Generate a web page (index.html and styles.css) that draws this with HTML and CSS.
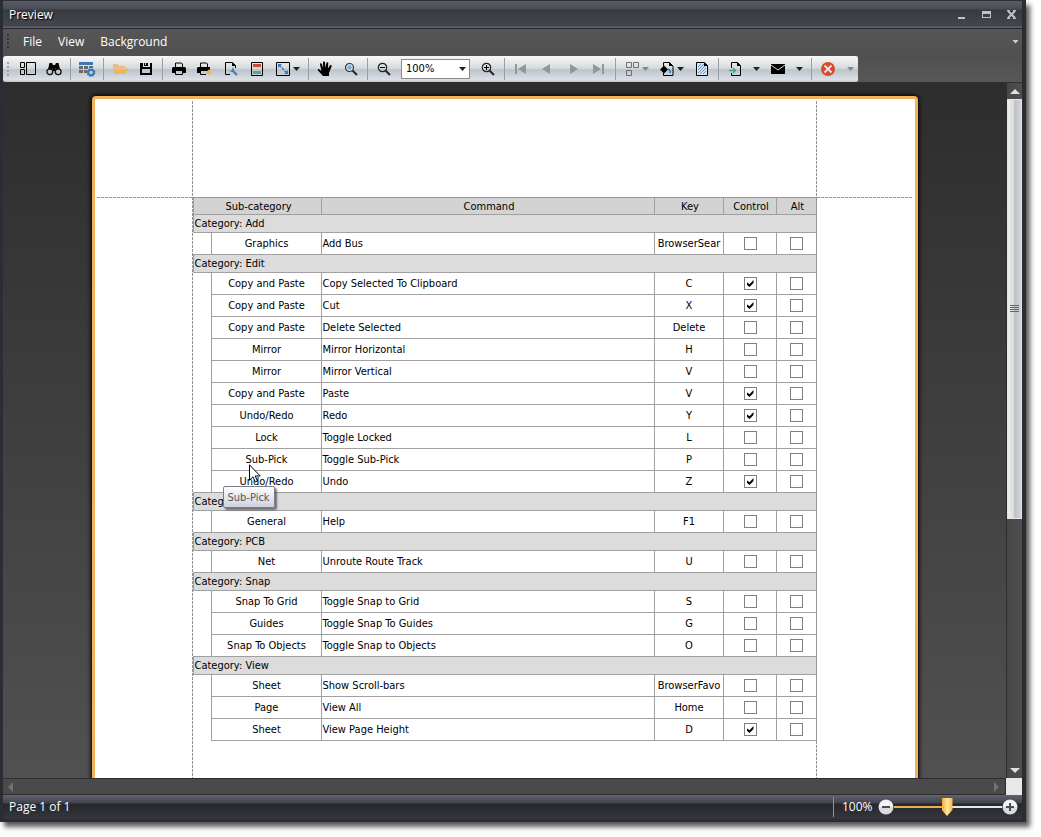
FILE: index.html
```html
<!DOCTYPE html>
<html lang="en">
<head>
<meta charset="utf-8">
<title>Preview</title>
<link rel="stylesheet" href="styles.css">
</head>
<body>
<div class="window">
  <header class="titlebar">
    <h1 class="title">Preview</h1>
    <div class="window-buttons">
      <button aria-label="Minimize"><svg width="11" height="11" viewBox="0 0 11 11"><path d="M2 8h7v2H2z" fill="#b9c3ce"/></svg></button>
      <button aria-label="Maximize"><svg width="11" height="11" viewBox="0 0 11 11"><path d="M1 2h9v7H1zM2 5v3h7V5z" fill="#b9c3ce" fill-rule="evenodd"/></svg></button>
      <button aria-label="Close"><svg width="11" height="11" viewBox="0 0 11 11"><path d="M2 2L9 9M9 2L2 9" stroke="#b9c3ce" stroke-width="2"/><path d="M1 1.500h3M7 1.500h3M1 9.500h3M7 9.500h3" stroke="#b9c3ce"/></svg></button>
    </div>
  </header>

  <div class="bars">
    <nav class="menubar">
      <span class="grip grip-dark"></span>
      <button class="menu">File</button>
      <button class="menu">View</button>
      <button class="menu">Background</button>
      <button class="menu-more" aria-label="Menu options"><i class="arrow"></i></button>
    </nav>
    <div class="toolbar">
      <span class="grip"></span>
      <button class="tool" aria-label="Document map"><svg width="16" height="14" viewBox="0 0 16 14"><path d="M.5.5h4v5h-4zM.5 7.500h4v5h-4zM6.500.5h9v12h-9z" fill="none" stroke="#000"/></svg></button>
      <button class="tool" aria-label="Search"><svg width="16" height="14" viewBox="0 0 16 14"><path d="M3.500 1H6l1 2h2l1-2h2.500L14 7.500H9.500V6h-3v1.500H2z"/><circle cx="3.800" cy="9.700" r="2.900" fill="none" stroke="#111" stroke-width="1.300"/><circle cx="12.200" cy="9.700" r="2.900" fill="none" stroke="#111" stroke-width="1.300"/><path d="M6.500 4h3v5h-3z"/></svg></button>
      <i class="sep"></i>
      <button class="tool" aria-label="Customize"><svg width="18" height="16" viewBox="0 0 18 16"><path d="M1 1h14v3H1z" fill="#3979b9"/><path d="M1 5h4v3H1zM6 5h4v3H6zM11 5h4v2h-4zM1 9h4v3H1zM6 9h3v3H6z" fill="#6a6a6a"/><circle cx="13" cy="11.500" r="2.800" fill="none" stroke="#3979b9" stroke-width="2"/><circle cx="13" cy="11.500" r="3.800" fill="none" stroke="#3979b9" stroke-width="1.200" stroke-dasharray="1.500"/></svg></button>
      <i class="sep"></i>
      <button class="tool" aria-label="Open"><svg width="16" height="14" viewBox="0 0 16 14"><path d="M1 2h5l1 2h6v2H4L1 11z" fill="#e3bd82"/><path d="M4 6.500h12L13 12H1z" fill="#f3b55b"/></svg></button>
      <button class="tool" aria-label="Save"><svg width="14" height="14" viewBox="0 0 14 14"><path d="M1 1h12v12H1zM4 1v4h7V1zM3 7v4h8V7z" fill-rule="evenodd"/><path d="M5 1h4v3H5z"/><path d="M6.500 1v2" stroke="#ddd"/></svg></button>
      <i class="sep"></i>
      <button class="tool" aria-label="Print"><svg width="16" height="14" viewBox="0 0 16 14"><path d="M1 6l1-1h12l1 1v5h-3V9H4v2H1z"/><path d="M4.500 6V1h6l1 1v4M4.500 9v3.500h7V9" fill="none" stroke="#000"/></svg></button>
      <button class="tool" aria-label="Quick print"><svg width="16" height="14" viewBox="0 0 16 14"><path d="M0 6l1-1h12v3l-3 1H4v2H0z"/><path d="M3.500 6V1h6l1 1v4M3.500 9v3.500H9" fill="none" stroke="#000"/><path d="M12 6.500l1 3 3 1.500-3 1-2 2v-2l-2.500-1 2.500-1.500z" fill="#f3b55b"/></svg></button>
      <button class="tool" aria-label="Page setup"><svg width="14" height="14" viewBox="0 0 14 14"><path d="M6 12.500H1.500V.5h7l3 3V6" fill="none" stroke="#000"/><path d="M8 0v4h4z"/><path d="M8.500 8.500L13 13" stroke="#3979b9" stroke-width="2"/><path d="M8 5.500c2 .5 2.500 2 1.500 3.500S6 10 5.500 8l1.700.8 1.300-1.300z" fill="#3979b9"/></svg></button>
      <button class="tool" aria-label="Header and footer"><svg width="14" height="14" viewBox="0 0 14 14"><path d="M1.500.5h11v13h-11z" fill="none" stroke="#000"/><path d="M3 2h8v3H3z" fill="#d14b2f"/><path d="M3 9h8v3H3z" fill="#4dae89"/></svg></button>
      <button class="tool drop" aria-label="Scale"><svg width="14" height="14" viewBox="0 0 14 14"><path d="M.5.5h13v13H.5z" fill="none" stroke="#000"/><path d="M3 3l8 8" stroke="#3979b9" stroke-width="1.500" stroke-dasharray="3 1"/><path d="M2 2h4L2 6zM12 12V8l-4 4z" fill="#3979b9"/></svg><i class="arrow"></i></button>
      <i class="sep"></i>
      <button class="tool" aria-label="Hand tool"><svg width="16" height="16" viewBox="0 0 16 16"><path d="M6 15L1 9.500C.2 8.400 1.500 7.600 2.500 8.400L4.500 10 3 3.500C2.800 2 4.500 2 4.900 3.300L6.200 7 6 1.600C6 .2 8 .2 8 1.600L8.400 7l1-5c.3-1.300 2-1 1.900.3L10.900 7.600l2-3c.7-1 2.300-.4 1.700.9L12 12v3z"/></svg></button>
      <button class="tool" aria-label="Magnifier"><svg width="14" height="14" viewBox="0 0 14 14"><path d="M8.500 8.500L13 13" stroke="#222" stroke-width="1.800"/><circle cx="5.500" cy="5.500" r="4" fill="#d6e0ea" stroke="#333" stroke-width="1.200"/><circle cx="5.500" cy="5.500" r="2.200" fill="#7eaedb"/></svg></button>
      <i class="sep"></i>
      <button class="tool" aria-label="Zoom out"><svg width="14" height="14" viewBox="0 0 14 14"><path d="M8.500 8.500L13 13" stroke="#222" stroke-width="1.800"/><circle cx="5.500" cy="5.500" r="4.200" fill="none" stroke="#222" stroke-width="1.200"/><path d="M3 5.500h5" stroke="#000"/></svg></button>
      <span class="zoom-box"><select aria-label="Zoom"><option>100%</option></select><i class="arrow"></i></span>
      <button class="tool" aria-label="Zoom in"><svg width="14" height="14" viewBox="0 0 14 14"><path d="M8.500 8.500L13 13" stroke="#222" stroke-width="1.800"/><circle cx="5.500" cy="5.500" r="4.200" fill="none" stroke="#222" stroke-width="1.200"/><path d="M3 5.500h5M5.500 3v5" stroke="#000"/></svg></button>
      <i class="sep"></i>
      <button class="tool" aria-label="First page"><svg width="12" height="10" viewBox="0 0 12 10"><path d="M0 0h2v10H0zM11 0v10L3 5z" fill="#939699"/></svg></button>
      <button class="tool" aria-label="Previous page"><svg width="10" height="10" viewBox="0 0 10 10"><path d="M8 0v10L0 5z" fill="#939699"/></svg></button>
      <button class="tool" aria-label="Next page"><svg width="10" height="10" viewBox="0 0 10 10"><path d="M2 0v10l8-5z" fill="#939699"/></svg></button>
      <button class="tool" aria-label="Last page"><svg width="12" height="10" viewBox="0 0 12 10"><path d="M9 0h2v10H9zM0 0v10l8-5z" fill="#939699"/></svg></button>
      <i class="sep"></i>
      <button class="tool drop off" aria-label="Multiple pages"><svg width="14" height="16" viewBox="0 0 14 16"><path d="M1.500 1.500h5v5h-5zM8.500 1.500h5v5h-5zM1.500 9.500h5v5h-5z" fill="none" stroke="#6d6e70"/></svg><i class="arrow"></i></button>
      <button class="tool drop" aria-label="Page color"><svg width="14" height="14" viewBox="0 0 14 14"><path d="M3.500 4V.5h6l3.500 3.500v9.500H3.500V11" fill="none" stroke="#000"/><path d="M9 0v4h4zM0 7.500L4 3.500l4 4-4 4z"/><path d="M8 7q3 1 2 4" fill="none" stroke="#3979b9" stroke-width="1.600"/></svg><i class="arrow"></i></button>
      <button class="tool" aria-label="Watermark"><svg width="14" height="14" viewBox="0 0 14 14"><path d="M1.500.5h8l3 3v10h-11z" fill="#d8e3ee" stroke="#000"/><path d="M9 0v4h4z"/><path d="M3 5l3-3M3 8l6-6M3 11l7-7M5 12l6-6M8 12l3-3" stroke="#5d94cb"/></svg></button>
      <i class="sep"></i>
      <button class="tool split" aria-label="Export"><svg width="14" height="14" viewBox="0 0 14 14"><path d="M3.500 6V.5h6l3 3v10h-9V11" fill="none" stroke="#000"/><path d="M9 0v4h4z"/><path d="M1 8.500h6M5 6l2.500 2.500L5 11" fill="none" stroke="#3aa77c" stroke-width="1.300"/></svg><i class="arrow"></i></button>
      <button class="tool split" aria-label="Send by e-mail"><svg width="14" height="12" viewBox="0 0 14 12"><path d="M0 1h14v10H0z"/><path d="M0 2l7 5 7-5" fill="none" stroke="#d5d9dd"/></svg><i class="arrow"></i></button>
      <i class="sep"></i>
      <button class="tool" aria-label="Close preview"><svg width="14" height="14" viewBox="0 0 14 14"><circle cx="7" cy="7" r="7" fill="#d84a2d"/><path d="M3.500 3.500l7 7M10.500 3.500l-7 7" stroke="#e8e8e8" stroke-width="1.800"/></svg></button>
      <button class="tool-more" aria-label="Toolbar options"><i class="arrow"></i></button>
    </div>
  </div>

  <main class="viewer">
    <div class="canvas">
      <article class="paper">
        <table class="report">
          <colgroup><col class="c-indent"><col class="c-sub"><col class="c-cmd"><col class="c-key"><col class="c-ctl"><col class="c-alt"></colgroup>
          <thead><tr><th colspan="2">Sub-category</th><th>Command</th><th>Key</th><th>Control</th><th>Alt</th></tr></thead>
          <tbody>
            <tr class="group"><td colspan="6">Category: Add</td></tr>
            <tr><td></td><td>Graphics</td><td>Add Bus</td><td>BrowserSear</td><td><input type="checkbox" aria-label="Control"></td><td><input type="checkbox" aria-label="Alt"></td></tr>
            <tr class="group"><td colspan="6">Category: Edit</td></tr>
            <tr><td></td><td>Copy and Paste</td><td>Copy Selected To Clipboard</td><td>C</td><td><input type="checkbox" aria-label="Control" checked></td><td><input type="checkbox" aria-label="Alt"></td></tr>
            <tr><td></td><td>Copy and Paste</td><td>Cut</td><td>X</td><td><input type="checkbox" aria-label="Control" checked></td><td><input type="checkbox" aria-label="Alt"></td></tr>
            <tr><td></td><td>Copy and Paste</td><td>Delete Selected</td><td>Delete</td><td><input type="checkbox" aria-label="Control"></td><td><input type="checkbox" aria-label="Alt"></td></tr>
            <tr><td></td><td>Mirror</td><td>Mirror Horizontal</td><td>H</td><td><input type="checkbox" aria-label="Control"></td><td><input type="checkbox" aria-label="Alt"></td></tr>
            <tr><td></td><td>Mirror</td><td>Mirror Vertical</td><td>V</td><td><input type="checkbox" aria-label="Control"></td><td><input type="checkbox" aria-label="Alt"></td></tr>
            <tr><td></td><td>Copy and Paste</td><td>Paste</td><td>V</td><td><input type="checkbox" aria-label="Control" checked></td><td><input type="checkbox" aria-label="Alt"></td></tr>
            <tr><td></td><td>Undo/Redo</td><td>Redo</td><td>Y</td><td><input type="checkbox" aria-label="Control" checked></td><td><input type="checkbox" aria-label="Alt"></td></tr>
            <tr><td></td><td>Lock</td><td>Toggle Locked</td><td>L</td><td><input type="checkbox" aria-label="Control"></td><td><input type="checkbox" aria-label="Alt"></td></tr>
            <tr><td></td><td>Sub-Pick</td><td>Toggle Sub-Pick</td><td>P</td><td><input type="checkbox" aria-label="Control"></td><td><input type="checkbox" aria-label="Alt"></td></tr>
            <tr><td></td><td>Undo/Redo</td><td>Undo</td><td>Z</td><td><input type="checkbox" aria-label="Control" checked></td><td><input type="checkbox" aria-label="Alt"></td></tr>
            <tr class="group"><td colspan="6">Category: Help</td></tr>
            <tr><td></td><td>General</td><td>Help</td><td>F1</td><td><input type="checkbox" aria-label="Control"></td><td><input type="checkbox" aria-label="Alt"></td></tr>
            <tr class="group"><td colspan="6">Category: PCB</td></tr>
            <tr><td></td><td>Net</td><td>Unroute Route Track</td><td>U</td><td><input type="checkbox" aria-label="Control"></td><td><input type="checkbox" aria-label="Alt"></td></tr>
            <tr class="group"><td colspan="6">Category: Snap</td></tr>
            <tr><td></td><td>Snap To Grid</td><td>Toggle Snap to Grid</td><td>S</td><td><input type="checkbox" aria-label="Control"></td><td><input type="checkbox" aria-label="Alt"></td></tr>
            <tr><td></td><td>Guides</td><td>Toggle Snap To Guides</td><td>G</td><td><input type="checkbox" aria-label="Control"></td><td><input type="checkbox" aria-label="Alt"></td></tr>
            <tr><td></td><td>Snap To Objects</td><td>Toggle Snap to Objects</td><td>O</td><td><input type="checkbox" aria-label="Control"></td><td><input type="checkbox" aria-label="Alt"></td></tr>
            <tr class="group"><td colspan="6">Category: View</td></tr>
            <tr><td></td><td>Sheet</td><td>Show Scroll-bars</td><td>BrowserFavo</td><td><input type="checkbox" aria-label="Control"></td><td><input type="checkbox" aria-label="Alt"></td></tr>
            <tr><td></td><td>Page</td><td>View All</td><td>Home</td><td><input type="checkbox" aria-label="Control"></td><td><input type="checkbox" aria-label="Alt"></td></tr>
            <tr><td></td><td>Sheet</td><td>View Page Height</td><td>D</td><td><input type="checkbox" aria-label="Control" checked></td><td><input type="checkbox" aria-label="Alt"></td></tr>
          </tbody>
        </table>
        <i class="guide guide-top"></i>
        <i class="guide guide-left"></i>
        <i class="guide guide-right"></i>
        <svg class="cursor" width="12" height="19" viewBox="0 0 12 19"><path d="M.5.800v15.400l3.500-3.400 2.300 5.200 2.200-1-2.300-5h5z" fill="#fff" stroke="#000"/></svg>
        <div class="tooltip" role="tooltip">Sub-Pick</div>
      </article>
    </div>
    <div class="vscroll">
      <button class="scroll-end" aria-label="Scroll up"><svg width="10" height="5" viewBox="0 0 10 5"><path d="M5 0l5 5H0z" fill="#e0e0e0"/></svg></button>
      <div class="thumb"><i></i></div>
      <button class="scroll-end scroll-down" aria-label="Scroll down"><svg width="10" height="5" viewBox="0 0 10 5"><path d="M0 0h10L5 5z" fill="#e0e0e0"/></svg></button>
    </div>
    <div class="hscroll">
      <svg width="5" height="10" viewBox="0 0 5 10"><path d="M5 0v10L0 5z" fill="#727272"/></svg>
      <svg width="5" height="10" viewBox="0 0 5 10"><path d="M0 0v10l5-5z" fill="#727272"/></svg>
    </div>
    <div class="corner"></div>
  </main>

  <footer class="statusbar">
    <span class="page-info">Page 1 of 1</span>
    <i class="status-sep"></i>
    <label class="zoom-label" for="zoom">100%</label>
    <button class="round" aria-label="Decrease zoom"><svg width="16" height="16" viewBox="0 0 16 16"><circle cx="8" cy="8" r="7.500" fill="#d9dbde"/><path d="M1 8a7 7 0 0 1 14 0z" fill="#f3f3f3"/><path d="M4 8h8" stroke="#484c54" stroke-width="2"/></svg></button>
    <input class="slider" id="zoom" type="range" min="0" max="100" value="49">
    <button class="round" aria-label="Increase zoom"><svg width="16" height="16" viewBox="0 0 16 16"><circle cx="8" cy="8" r="7.500" fill="#d9dbde"/><path d="M1 8a7 7 0 0 1 14 0z" fill="#f3f3f3"/><path d="M4 8h8M8 4v8" stroke="#484c54" stroke-width="2"/></svg></button>
  </footer>
</div>
</body>
</html>
```

FILE: styles.css
```css
* { box-sizing: border-box; }

body {
  margin: 0;
  background: #fff;
  overflow: hidden;
  font: 12px/16px "Open Sans", "Noto Sans", sans-serif;
}

button {
  margin: 0;
  padding: 0;
  border: 0;
  background: none;
  font: inherit;
  color: inherit;
}

svg { display: block; }

/* Window frame */
.window {
  display: flex;
  flex-direction: column;
  height: calc(100vh - 15px);
  margin: 0 15px 15px 0;
  border: solid #2b2d34;
  border-width: 1px 4px 3px 3px;
  background: #4f4f4f;
  box-shadow: 4px 5px 5px rgba(0, 0, 0, .65);
  color: #fff;
}

.titlebar {
  display: flex;
  flex: none;
  align-items: center;
  justify-content: space-between;
  height: 28px;
  padding: 0 5px 1px 6px;
  background: linear-gradient(#5a5c66 0, #484a55 8px, #393a3e 9px, #44464f 25px, #5f626d 26px, #5f626d 27px, #272830 27px);
}

.title {
  margin: 0;
  font-size: 12px;
  font-weight: 400;
  text-shadow: 1px 1px 1px #000;
}

.window-buttons { display: flex; gap: 14px; }

/* Menu bar and toolbar */
.bars {
  flex: none;
  background: linear-gradient(#565656, #505050 50%, #585858);
  border-bottom: 1px solid #303030;
}

.menubar {
  display: flex;
  align-items: center;
  height: 27px;
  padding-bottom: 2px;
}

.menu { padding: 0 8px; }
.menu-more { margin-left: auto; padding: 6px 3px; color: #ccd; }

.grip {
  width: 12px;
  height: 15px;
  background: radial-gradient(circle at 1px 1px, #9da3a9 1px, transparent 1px) 4px 0 / 8px 4px repeat-y;
}

.grip-dark {
  background-image: radial-gradient(circle at 1px 1px, #333 1px, transparent 1px);
}

.arrow {
  display: block;
  flex: none;
  width: 7px;
  height: 4px;
  background: currentColor;
  clip-path: polygon(0 0, 100% 0, 50% 100%);
}

.toolbar {
  display: flex;
  align-items: center;
  width: max-content;
  height: 26px;
  border-radius: 3px 2px 2px 3px;
  background: linear-gradient(#f7f7f8, #d7dadd 47%, #bcc3ca 53%, #dbe1e7 24px, #b9bec4);
  color: #222;
}

.tool {
  display: flex;
  align-items: center;
  justify-content: center;
  width: 26px;
  height: 26px;
}

.drop { width: 35px; padding-left: 6px; justify-content: flex-start; gap: 3px; }
.split { width: 43px; padding-left: 6px; justify-content: flex-start; gap: 11px; }
.off .arrow { background: #85888b; }
.tool-more { width: 17px; padding-left: 6px; color: #7c8aa0; }

.sep {
  width: 1px;
  height: 22px;
  margin: 0 3px;
  background: #9a9fa5;
}

.zoom-box {
  display: flex;
  align-items: center;
  width: 69px;
  margin: 0 5px 0 4px;
}

.zoom-box select {
  appearance: none;
  width: 69px;
  height: 20px;
  padding: 0 0 0 4px;
  border: 1px solid #8a8a8a;
  border-radius: 0;
  background: #fff;
  color: #000;
  font: 11px/14px "DejaVu Sans Condensed", "DejaVu Sans", sans-serif;
}

.zoom-box .arrow { margin-left: -11px; }

/* Document area */
.viewer {
  display: grid;
  flex: 1;
  grid-template: minmax(0, 1fr) 17px / minmax(0, 1fr) 16px;
  min-height: 0;
}

.canvas {
  overflow: hidden;
  padding-top: 13px;
  background: linear-gradient(#2d2d2d, #515151);
}

.paper {
  position: relative;
  width: 826px;
  min-height: 1100px;
  margin: 0 auto;
  padding: 98px;
  border: 3px solid #f2b25c;
  border-radius: 4px;
  background: #fff;
  box-shadow: 0 0 4px 1px #000;
}

.report {
  width: 100%;
  table-layout: fixed;
  border-collapse: separate;
  border-spacing: 0;
  color: #000;
  font: 11px/14px "DejaVu Sans Condensed", "DejaVu Sans", sans-serif;
}

.c-indent { width: 18px; }
.c-sub { width: 110px; }
.c-key { width: 69px; }
.c-ctl { width: 53px; }
.c-alt { width: 41px; }

.report th,
.report td {
  height: 22px;
  padding: 0 0 0 1px;
  overflow: hidden;
  border: solid #a0a0a0;
  border-width: 1px 0 0 1px;
  text-align: center;
  white-space: nowrap;
}

.report th {
  height: 17px;
  padding: 1px 0 0 3px;
  background: #d3d3d3;
  font-weight: 400;
}

.report .group td {
  height: 18px;
  background: #dcdcdc;
  text-align: left;
}

.report td:nth-child(3) { text-align: left; }
.report tr > :last-child { border-right-width: 1px; }
.report tr:not(.group) td:first-child { border-width: 0; }
.report .group + tr td:first-child { border-top-width: 1px; }
.report tbody tr:last-child td { height: 23px; }
.report tbody tr:last-child td:not(:first-child) { border-bottom-width: 1px; }

.report input {
  display: block;
  appearance: none;
  width: 13px;
  height: 13px;
  margin: 0 auto;
  border: 1px solid #808080;
  background: #fff;
}

.report input:checked::after {
  content: "";
  display: block;
  width: 7px;
  height: 7px;
  margin: 2px;
  background: #000;
  clip-path: polygon(0 28%, 43% 62%, 100% 0, 100% 42%, 43% 100%, 0 66%);
}

.guide { position: absolute; }

.guide-top {
  top: 98px;
  left: 2px;
  right: 2px;
  height: 1px;
  background: repeating-linear-gradient(90deg, #929292 0 3px, transparent 3px 4px);
}

.guide-left,
.guide-right {
  top: 2px;
  bottom: 2px;
  width: 1px;
  background: repeating-linear-gradient(#929292 0 3px, transparent 3px 4px);
}

.guide-left { left: 97px; }
.guide-right { right: 98px; }

.cursor { position: absolute; top: 365px; left: 154px; z-index: 2; }

.tooltip {
  position: absolute;
  top: 387px;
  left: 128px;
  padding: 4px 4px 2px;
  border: 1px solid #7c7c84;
  border-radius: 2px;
  background: linear-gradient(#fff, #cfd1e2);
  box-shadow: 2px 2px 2px rgba(0, 0, 0, .5);
  color: #575757;
  font: 11px/14px "DejaVu Sans Condensed", "DejaVu Sans", sans-serif;
}

/* Scroll bars */
.vscroll {
  display: flex;
  flex-direction: column;
  border-left: 1px solid #2b2d31;
  background: linear-gradient(90deg, #474747, #4f4f4f);
}

.scroll-end {
  display: grid;
  place-items: center;
  flex: none;
  height: 16px;
}

.scroll-down { margin-top: auto; }

.thumb {
  display: grid;
  place-items: center;
  flex: 0 0 60.5%;
  border: 1px solid #e6e6e6;
  background: linear-gradient(90deg, #ededed, #dadada 48%, #bfc1c4 50%, #d0d4d8);
}

.thumb i {
  width: 9px;
  height: 8px;
  background: repeating-linear-gradient(#666 0 1px, transparent 1px 2px);
}

.hscroll {
  display: flex;
  align-items: center;
  justify-content: space-between;
  padding: 0 6px 0 5px;
  border: solid #2d2d31;
  border-width: 1px 1px 1px 0;
  background: #4a4a4a;
}

.corner { background: #e8e8e8; }

/* Status bar */
.statusbar {
  display: flex;
  flex: none;
  align-items: center;
  height: 24px;
  padding: 0 4px 0 6px;
  background: linear-gradient(#606370, #41434d 8px, #26272b 9px, #36373d);
}

.status-sep {
  width: 1px;
  height: 20px;
  margin-left: auto;
  background: #8f939c;
}

.zoom-label { width: 36px; margin-left: 8px; }
.round { width: 16px; height: 16px; }

.slider {
  appearance: none;
  width: 108px;
  height: 18px;
  margin: 0;
  background: linear-gradient(90deg, #e9b04a 50%, #e6e6e6 50%) center / 100% 2px no-repeat;
}

.slider::-webkit-slider-thumb {
  appearance: none;
  width: 11px;
  height: 18px;
  background: linear-gradient(90deg, #f3a933, #ffe9a0 50%, #f3b13e);
  clip-path: polygon(0 0, 100% 0, 100% 65%, 50% 100%, 0 65%);
}
```
